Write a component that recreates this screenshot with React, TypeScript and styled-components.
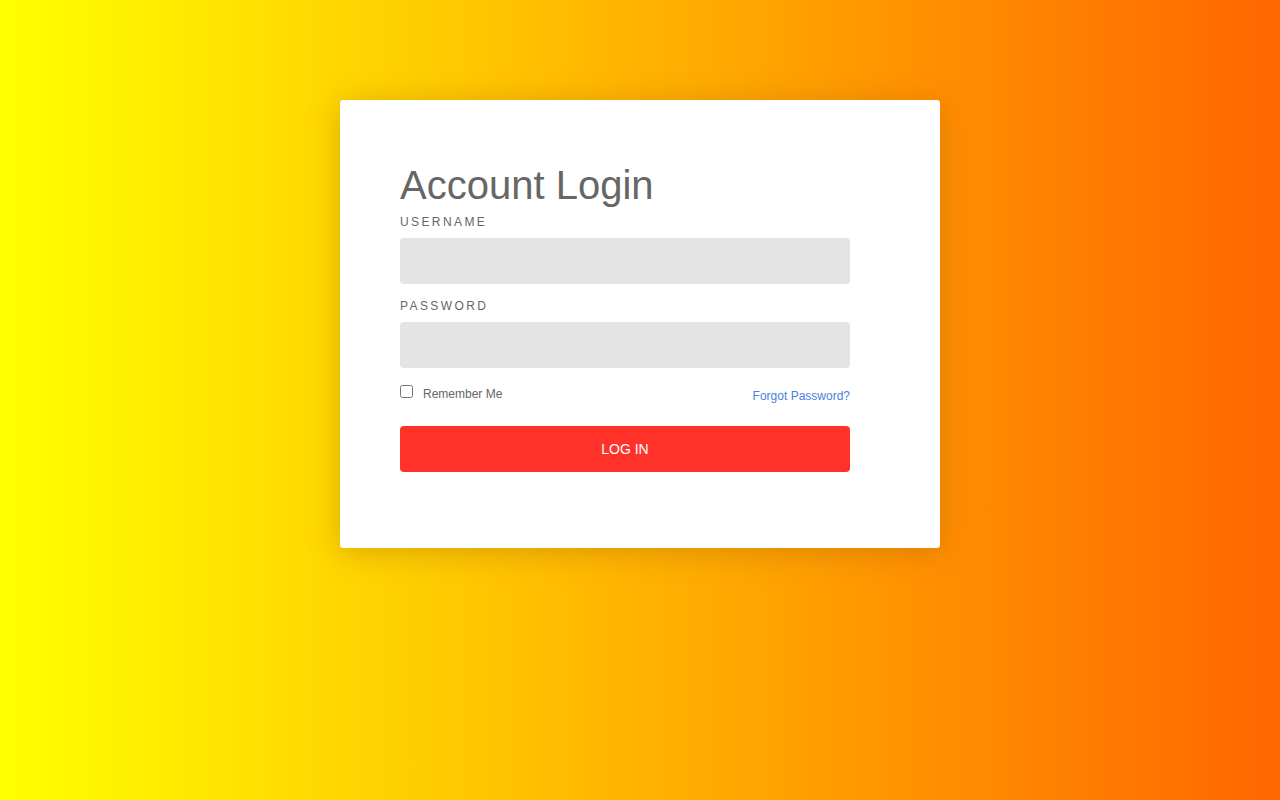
import React from "react";
import styled, { createGlobalStyle } from "styled-components";

const GlobalStyle = createGlobalStyle`
  html, body {
    margin: 0;
    padding: 0;
    height: 100%;
  }
  body {
    font-family: "Liberation Sans", Arial, sans-serif;
  }
`;

const Page = styled.div`
  width: 100%;
  height: 800px;
  background: linear-gradient(to right, #ffff00, #ff6600);
  display: flex;
  justify-content: center;
  align-items: flex-start;
  padding-top: 100px;
  box-sizing: border-box;
`;

const Card = styled.div`
  width: 600px;
  height: 448px;
  box-sizing: border-box;
  background: #ffffff;
  border-radius: 3px;
  padding: 57px 90px 0 60px;
  box-shadow: 0 4px 30px rgba(150, 90, 0, 0.35);
`;

const Title = styled.h1`
  margin: 0;
  font-size: 40px;
  font-weight: 400;
  line-height: 56px;
  padding-bottom: 2px;
  color: #666666;
`;

const Label = styled.label`
  display: block;
  font-size: 12px;
  letter-spacing: 2.4px;
  color: #666666;
  line-height: 14px;
  margin-bottom: 9px;
`;

const Field = styled.div`
  margin-bottom: ${(p: { $last?: boolean }) => (p.$last ? "16px" : "15px")};
`;

const Input = styled.input`
  display: block;
  width: 450px;
  height: 46px;
  box-sizing: border-box;
  border: none;
  border-radius: 4px;
  background: #e4e4e4;
  outline: none;
  padding: 0 12px;
  font-size: 14px;
`;

const OptionsRow = styled.div`
  display: flex;
  justify-content: space-between;
  align-items: flex-start;
  height: 42px;
`;

const Remember = styled.label`
  display: flex;
  align-items: flex-start;
  font-size: 12px;
  line-height: 14px;
  color: #666666;
  gap: 10px;
`;

const Check = styled.input`
  margin: 1px 0 0;
  width: 13px;
  height: 13px;
`;

const RememberText = styled.span`
  padding-top: 3px;
`;

const Forgot = styled.a`
  font-size: 12px;
  line-height: 14px;
  color: #4a7fe0;
  text-decoration: none;
  margin-top: 5px;
`;

const Button = styled.button`
  display: block;
  width: 450px;
  height: 46px;
  border: none;
  border-radius: 4px;
  background: #ff3229;
  color: #ffffff;
  font-family: "Liberation Sans", Arial, sans-serif;
  font-size: 14px;
  cursor: pointer;
`;

const App = () => {
  return (
    <>
      <GlobalStyle />
      <Page>
        <Card>
          <Title>Account Login</Title>
          <Field>
            <Label>USERNAME</Label>
            <Input type="text" />
          </Field>
          <Field $last>
            <Label>PASSWORD</Label>
            <Input type="password" />
          </Field>
          <OptionsRow>
            <Remember>
              <Check type="checkbox" />
              <RememberText>Remember Me</RememberText>
            </Remember>
            <Forgot href="#">Forgot Password?</Forgot>
          </OptionsRow>
          <Button>LOG IN</Button>
        </Card>
      </Page>
    </>
  );
};

export default App;
